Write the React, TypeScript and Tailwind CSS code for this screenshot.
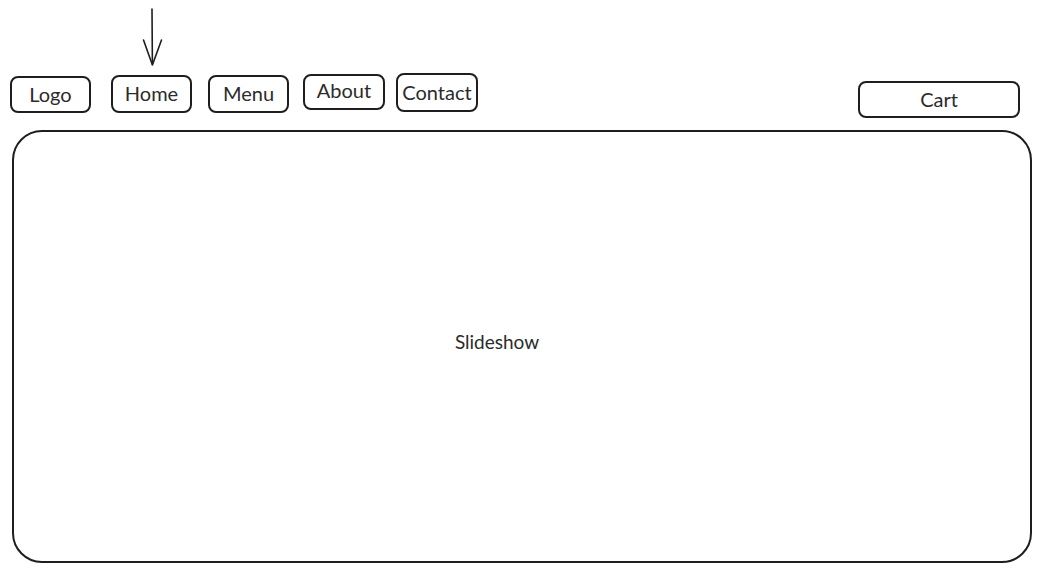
import React from 'react';

const font = { fontFamily: 'Lato, "Open Sans", sans-serif' };

function NavBox({ label, className }: { label: string; className: string }) {
  return (
    <div
      className={`flex items-center justify-center border-2 border-[#1e1e1e] rounded-[8px] text-[20px] text-[#2b2b2b] ${className}`}
    >
      {label}
    </div>
  );
}

export default function App() {
  return (
    <div className="relative w-[1041px] h-[572px] bg-white overflow-hidden" style={font}>
      {/* pointer arrow over Home */}
      <svg className="absolute left-0 top-0" width="200" height="70" viewBox="0 0 200 70" fill="none">
        <path d="M152 9 L152.4 64" stroke="#1e1e1e" strokeWidth="1.6" strokeLinecap="round" />
        <path d="M143.5 40 L152.4 65 L161.5 40" stroke="#1e1e1e" strokeWidth="1.6" strokeLinecap="round" strokeLinejoin="round" />
      </svg>

      <div className="flex items-start pt-[73px]">
        <NavBox label="Logo" className="ml-[10px] mt-[3px] w-[81px] h-[37px] pb-[2px]" />
        <NavBox label="Home" className="ml-[20px] mt-[2px] w-[81px] h-[38px] pb-[2px]" />
        <NavBox label="Menu" className="ml-[16px] mt-[2px] w-[81px] h-[38px] pb-[2px]" />
        <NavBox label="About" className="ml-[14px] mt-[1px] w-[82px] h-[36px] pb-[4px]" />
        <NavBox label="Contact" className="ml-[11px] w-[82px] h-[39px] pb-[2px]" />
        <NavBox label="Cart" className="ml-auto mr-[21px] mt-[8px] w-[162px] h-[37px] pb-[2px]" />
      </div>

      <div className="ml-[12px] mt-[12px] w-[1020px] h-[433px] rounded-[30px] border-2 border-[#1e1e1e] flex items-center justify-center pr-[50px] pb-[8px]">
        <span className="text-[19px] text-[#2b2b2b]">Slideshow</span>
      </div>
    </div>
  );
}
